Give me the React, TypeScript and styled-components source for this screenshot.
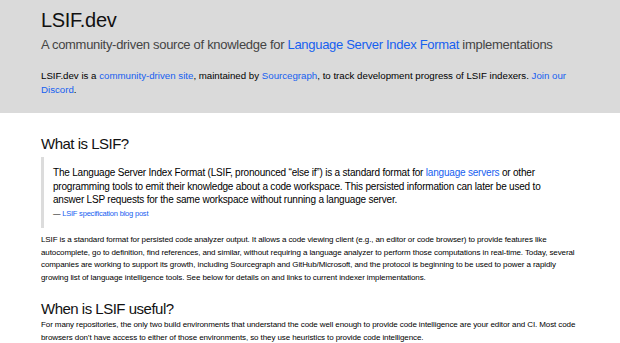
import styled, { createGlobalStyle } from 'styled-components';

const GlobalStyle = createGlobalStyle`
  html, body {
    margin: 0;
    padding: 0;
    background: #ffffff;
  }
  body {
    font-family: 'Liberation Sans', Arial, Helvetica, sans-serif;
    color: #111;
  }
`;

const Hero = styled.header`
  background: #dadada;
  padding: 8px 41px 16px;
`;

const Title = styled.h1`
  margin: 0;
  font-size: 20px;
  font-weight: 400;
  line-height: 24px;
  letter-spacing: -0.3px;
  color: #111;
`;

const Tagline = styled.p`
  margin: 5px 0 0;
  font-size: 13px;
  line-height: 16px;
  letter-spacing: -0.3px;
  color: #444;
`;

const Intro = styled.p`
  margin: 16px 0 0;
  font-size: 9.7px;
  line-height: 14px;
  color: #000;
`;

const Link = styled.a`
  color: #1660f0;
  text-decoration: none;
`;

const Main = styled.main`
  padding: 22px 41px 0;
`;

const SectionTitle = styled.h2<{ $gap?: number }>`
  margin: ${({ $gap }) => $gap ?? 0}px 0 0;
  font-size: 15px;
  font-weight: 400;
  line-height: 18px;
  letter-spacing: -0.5px;
  color: #111;
`;

const Quote = styled.blockquote`
  margin: 4px 0 0;
  padding: 9px 30px 9.5px 9px;
  border-left: 3px solid #dcdcdc;
  font-size: 10px;
  line-height: 13.5px;
  letter-spacing: -0.2px;
  color: #000;
`;

const Cite = styled.div`
  margin-top: 2px;
  font-size: 7.5px;
  line-height: 10px;
`;

const Body = styled.p<{ $gap?: number }>`
  margin: ${({ $gap }) => $gap ?? 6}px 0 0;
  font-size: 8px;
  line-height: 12.5px;
  letter-spacing: -0.1px;
  color: #000;
`;

export default function App() {
  return (
    <>
      <GlobalStyle />
      <Hero>
        <Title>LSIF.dev</Title>
        <Tagline>
          A community-driven source of knowledge for{' '}
          <Link href="#">Language Server Index Format</Link> implementations
        </Tagline>
        <Intro>
          LSIF.dev is a <Link href="#">community-driven site</Link>, maintained by{' '}
          <Link href="#">Sourcegraph</Link>, to track development progress of LSIF indexers.{' '}
          <Link href="#">Join our Discord</Link>.
        </Intro>
      </Hero>
      <Main>
        <SectionTitle>What is LSIF?</SectionTitle>
        <Quote>
          The Language Server Index Format (LSIF, pronounced “else if”) is a standard format for{' '}
          <Link href="#">language servers</Link> or other programming tools to emit their knowledge
          about a code workspace. This persisted information can later be used to answer LSP
          requests for the same workspace without running a language server.
          <Cite>
            — <Link href="#">LSIF specification blog post</Link>
          </Cite>
        </Quote>
        <Body>
          LSIF is a standard format for persisted code analyzer output. It allows a code viewing
          client (e.g., an editor or code browser) to provide features like autocomplete, go to
          definition, find references, and similar, without requiring a language analyzer to
          perform those computations in real-time. Today, several companies are working to support
          its growth, including Sourcegraph and GitHub/Microsoft, and the protocol is beginning to
          be used to power a rapidly growing list of language intelligence tools. See below for
          details on and links to current indexer implementations.
        </Body>
        <SectionTitle $gap={16}>When is LSIF useful?</SectionTitle>
        <Body $gap={1}>
          For many repositories, the only two build environments that understand the code well
          enough to provide code intelligence are your editor and CI. Most code browsers don’t have
          access to either of those environments, so they use heuristics to provide code
          intelligence.
        </Body>
      </Main>
    </>
  );
}
